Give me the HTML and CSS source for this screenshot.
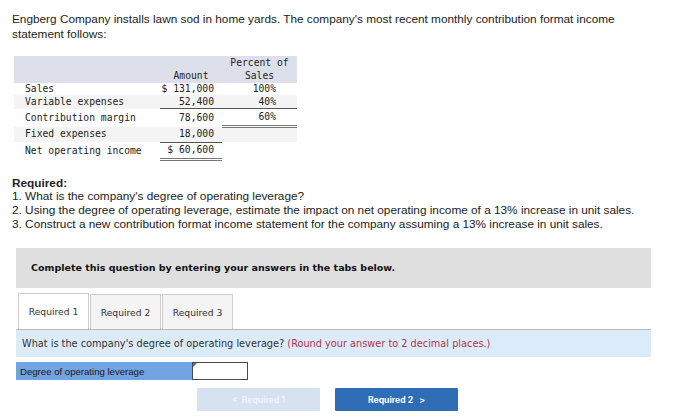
FILE: index.html
```html
<!DOCTYPE html>
<html>
<head>
<meta charset="utf-8">
<link rel="stylesheet" href="styles.css">
</head>
<body>
<div class="page">
  <p class="intro">Engberg Company installs lawn sod in home yards. The company's most recent monthly contribution format income statement follows:</p>

  <table class="stmt">
    <thead>
      <tr>
        <th class="c-label"></th>
        <th class="c-amt">Amount</th>
        <th class="c-pct">Percent of<br>Sales</th>
      </tr>
    </thead>
    <tbody>
      <tr class="r1">
        <td class="c-label">Sales</td>
        <td class="c-amt">$ 131,000</td>
        <td class="c-pct">100%</td>
      </tr>
      <tr class="r2 stripe">
        <td class="c-label">Variable expenses</td>
        <td class="c-amt single">52,400</td>
        <td class="c-pct single">40%</td>
      </tr>
      <tr class="r3">
        <td class="c-label">Contribution margin</td>
        <td class="c-amt">78,600</td>
        <td class="c-pct dbl">60%</td>
      </tr>
      <tr class="r4 stripe">
        <td class="c-label">Fixed expenses</td>
        <td class="c-amt single">18,000</td>
        <td class="c-pct"></td>
      </tr>
      <tr class="r5">
        <td class="c-label">Net operating income</td>
        <td class="c-amt dbl">$ 60,600</td>
        <td class="c-pct"></td>
      </tr>
    </tbody>
  </table>

  <div class="required">
    <p class="req-title">Required:</p>
    <p>1. What is the company's degree of operating leverage?</p>
    <p>2. Using the degree of operating leverage, estimate the impact on net operating income of a 13% increase in unit sales.</p>
    <p>3. Construct a new contribution format income statement for the company assuming a 13% increase in unit sales.</p>
  </div>

  <div class="notice">Complete this question by entering your answers in the tabs below.</div>

  <div class="tabs">
    <div class="tab active">Required 1</div>
    <div class="tab">Required 2</div>
    <div class="tab">Required 3</div>
  </div>

  <div class="question">What is the company's degree of operating leverage? <span class="hint">(Round your answer to 2 decimal places.)</span></div>

  <div class="answer">
    <div class="answer-label">Degree of operating leverage</div>
    <div class="answer-input"><span class="corner"></span></div>
  </div>

  <div class="nav">
    <div class="btn prev">&lt;&nbsp;&nbsp;Required 1</div>
    <div class="btn next">Required 2&nbsp;&nbsp;&nbsp;&gt;</div>
  </div>
</div>
</body>
</html>
```

FILE: styles.css
```css
html, body {
  margin: 0;
  padding: 0;
  background: #ffffff;
}

.page {
  padding: 12px 0 0 12px;
  font-family: "Liberation Sans", Arial, sans-serif;
  color: #222;
}

.intro {
  margin: 0;
  width: 640px;
  font-size: 11.8px;
  line-height: 15px;
}

.stmt {
  margin: 14px 0 0 2px;
  border-collapse: collapse;
  font-family: "DejaVu Sans Mono", monospace;
  font-size: 9.7px;
  color: #222;
}

.stmt th {
  background: #dde0ea;
  font-weight: normal;
  text-align: center;
  vertical-align: bottom;
  line-height: 13px;
  padding: 0 0 1px 0;
  height: 25px;
}

.stmt td {
  padding: 0;
  line-height: 12px;
}

.c-label { width: 135px; padding-left: 11px !important; text-align: left; }
.c-amt { width: 62px; text-align: right; }
.stmt td.c-amt { padding-right: 8px; width: 54px; }
.c-pct { width: 75px; }
.stmt td.c-pct { text-align: right; padding-right: 21px; width: 54px; }

.stripe td { background: #f4f4f4; }

.r1 td { height: 12px; }
.r2 td { height: 13px; }
.r3 td { height: 16px; vertical-align: middle; }
.r4 td { height: 14px; }
.r5 td { height: 15px; vertical-align: middle; }

td.single { border-bottom: 1px solid #555; }
td.dbl { border-bottom: 3px double #777; }

.required {
  margin-top: 16px;
  font-size: 11.8px;
  line-height: 13.7px;
}
.required p { margin: 0; }
.req-title { font-weight: bold; }

.notice {
  margin: 17px 0 0 4px;
  width: 620px;
  height: 38px;
  padding-left: 15px;
  padding-bottom: 2px;
  box-sizing: content-box;
  background: #dfdfdf;
  display: flex;
  align-items: center;
  font-family: "DejaVu Sans", Verdana, sans-serif;
  font-weight: bold;
  font-size: 9.5px;
  color: #111;
}

.tabs {
  margin: 6px 0 0 6px;
  display: flex;
  height: 35px;
  position: relative;
  z-index: 1;
}

.tab {
  width: 69px;
  height: 34px;
  border: 1px solid #cfcfcf;
  border-bottom: none;
  background: #f4f4f4;
  display: flex;
  align-items: center;
  justify-content: center;
  font-family: "DejaVu Sans", Verdana, sans-serif;
  font-size: 9.2px;
  color: #333;
  margin-right: 1px;
  box-sizing: content-box;
}

.tab.active {
  background: #ffffff;
  height: 35px;
  margin-top: -1px;
}

.question {
  margin-left: 4px;
  width: 629px;
  height: 27px;
  padding-left: 6px;
  border-top: 1px solid #b9b9b9;
  background: #dcebf9;
  display: flex;
  align-items: center;
  font-family: "DejaVu Sans", Verdana, sans-serif;
  font-size: 9.75px;
  color: #333;
  white-space: pre;
}

.hint { color: #b8324b; }

.answer {
  margin: 5px 0 0 4px;
  display: flex;
  height: 18px;
}

.answer-label {
  width: 172px;
  padding-left: 4px;
  background: #72a3e2;
  display: flex;
  align-items: center;
  font-family: "Liberation Sans", Arial, sans-serif;
  font-size: 9.6px;
  color: #1a1a1a;
}

.answer-input {
  width: 54px;
  height: 16px;
  border: 1px solid #4a4a4a;
  background: #fff;
  position: relative;
}

.corner {
  position: absolute;
  left: 0;
  top: 0;
  width: 0;
  height: 0;
  border-top: 4px solid #3a6fc2;
  border-right: 4px solid transparent;
}

.nav {
  margin: 8px 0 0 185px;
  display: flex;
  gap: 15px;
}

.btn {
  width: 123px;
  height: 23px;
  display: flex;
  align-items: center;
  justify-content: center;
  font-family: Inter, Roboto, sans-serif;
  font-weight: bold;
  font-size: 8.6px;
  border-radius: 1px;
}

.btn.prev {
  background: #d6e2ef;
  color: #eef3f9;
}

.btn.next {
  background: #2f6db6;
  color: #ffffff;
}
```
